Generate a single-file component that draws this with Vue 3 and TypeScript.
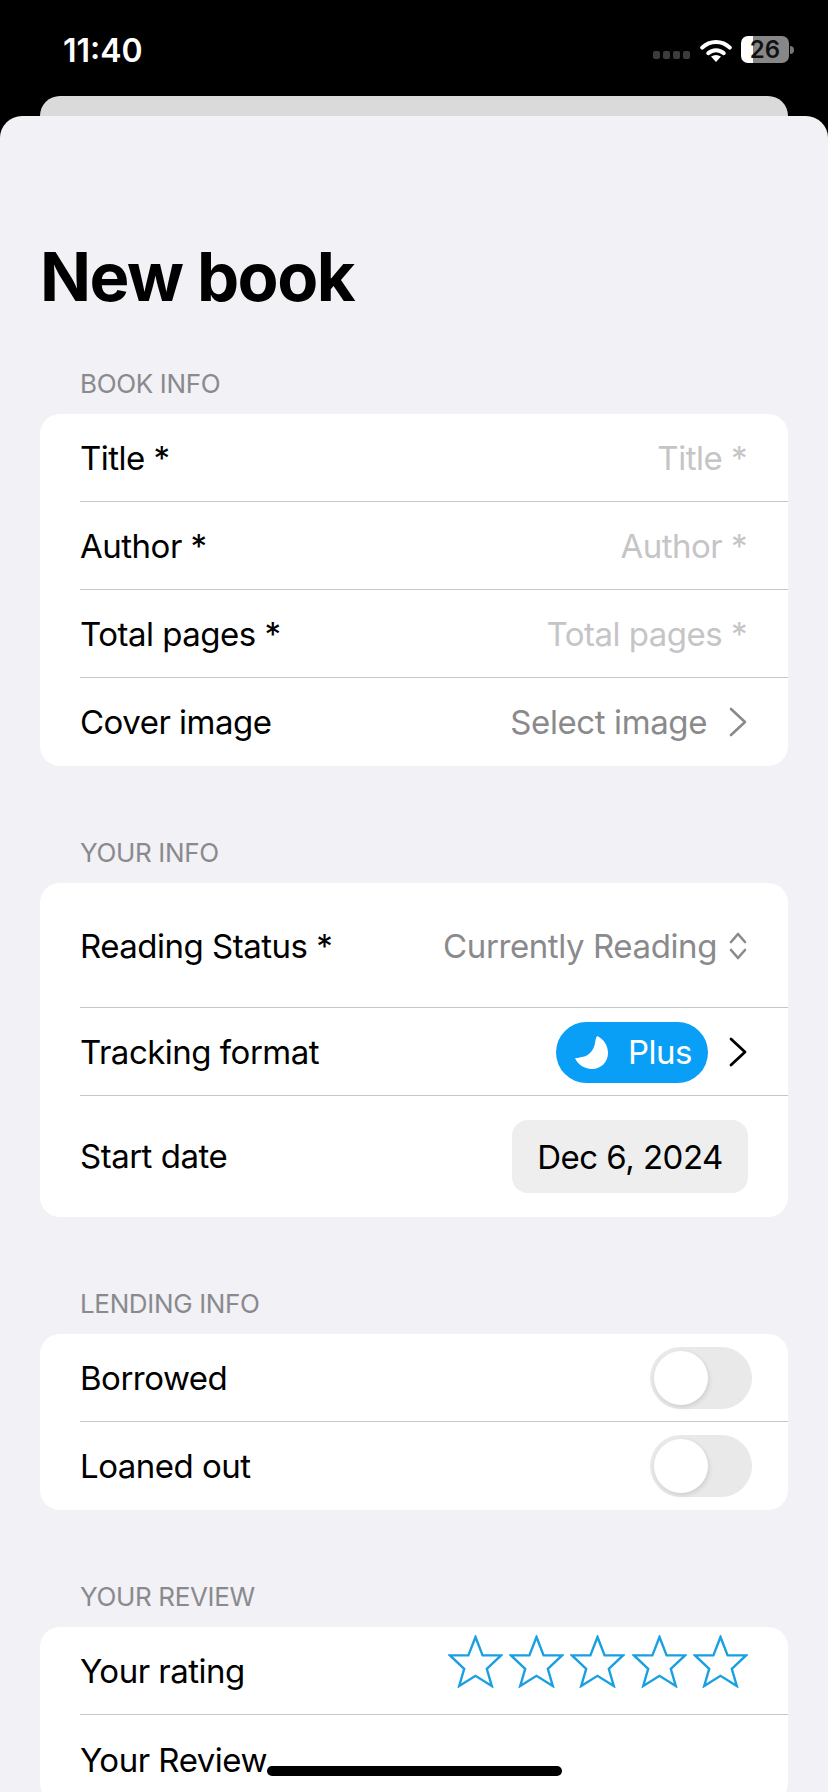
<script setup lang="ts">
const bookRows = [
  { label: 'Title *', hint: 'Title *' },
  { label: 'Author *', hint: 'Author *' },
  { label: 'Total pages *', hint: 'Total pages *' },
]
const lendingRows = ['Borrowed', 'Loaned out']
const stars = [1, 2, 3, 4, 5]
</script>

<template>
  <div class="screen">
    <header class="status-bar">
      <span class="time">11:40</span>
      <div class="status-icons">
        <div class="cell-dots"><i></i><i></i><i></i><i></i></div>
        <svg class="wifi" width="32" height="25" viewBox="0 0 32 25">
          <path d="M2.2 10.6 A19.5 19.5 0 0 1 29.8 10.6" fill="none" stroke="#fff" stroke-width="4" stroke-linecap="round" />
          <path d="M8.2 16.2 A11.5 11.5 0 0 1 23.8 16.2" fill="none" stroke="#fff" stroke-width="4" stroke-linecap="round" />
          <path d="M16 25 L11 19.6 Q16 16.2 21 19.6 Z" fill="#fff" />
        </svg>
        <div class="battery">
          <div class="battery-body"><span>26</span></div>
          <div class="battery-nub"></div>
        </div>
      </div>
    </header>
    <div class="back-sheet"></div>

    <main class="sheet">
      <h1 class="title">New book</h1>

      <section class="section">
        <h2 class="section-title">Book info</h2>
        <div class="card">
          <div v-for="row in bookRows" :key="row.label" class="row">
            <span>{{ row.label }}</span>
            <span class="hint">{{ row.hint }}</span>
          </div>
          <div class="row">
            <span>Cover image</span>
            <div class="row-end">
              <span class="muted">Select image</span>
              <svg class="chevron" width="18" height="30" viewBox="0 0 18 30">
                <path d="M2 2 L16 15 L2 28" fill="none" stroke="#8a8a8c" stroke-width="2.6" stroke-linecap="round" stroke-linejoin="round" />
              </svg>
            </div>
          </div>
        </div>
      </section>

      <section class="section">
        <h2 class="section-title">Your info</h2>
        <div class="card">
          <div class="row row-status">
            <span>Reading Status *</span>
            <div class="row-end status-end">
              <span class="muted">Currently Reading</span>
              <svg width="18" height="28" viewBox="0 0 18 28">
                <path d="M2 10 L9 2 L16 10 M2 18 L9 26 L16 18" fill="none" stroke="#8a8a8c" stroke-width="2.6" stroke-linecap="round" stroke-linejoin="round" />
              </svg>
            </div>
          </div>
          <div class="row">
            <span>Tracking format</span>
            <div class="row-end tracking-end">
              <div class="plus-pill">
                <svg width="33" height="33" viewBox="0 0 33 33">
                  <path d="M22 0 C29 3 33 10 33 17 C33 26 26 33 17 33 C10 33 3 29 0 22 C3 22 5 21.5 7 21 C14 20 19 14 20 7 C20.3 4 21 2 22 0 Z" fill="#fff" />
                </svg>
                <span>Plus</span>
              </div>
              <svg width="18" height="30" viewBox="0 0 18 30">
                <path d="M2 2 L16 15 L2 28" fill="none" stroke="#000" stroke-width="2.8" stroke-linecap="round" stroke-linejoin="round" />
              </svg>
            </div>
          </div>
          <div class="row row-date">
            <span>Start date</span>
            <div class="date-pill">Dec 6, 2024</div>
          </div>
        </div>
      </section>

      <section class="section">
        <h2 class="section-title">Lending info</h2>
        <div class="card">
          <div v-for="label in lendingRows" :key="label" class="row row-toggle">
            <span>{{ label }}</span>
            <div class="toggle"><div class="knob"></div></div>
          </div>
        </div>
      </section>

      <section class="section">
        <h2 class="section-title">Your review</h2>
        <div class="card">
          <div class="row row-rating">
            <span>Your rating</span>
            <div class="stars">
              <svg v-for="n in stars" :key="n" width="55" height="53" viewBox="0 0 55 53">
                <path d="M27.5 2 L34.6 20.4 L53 20.4 L38.8 33.8 L43.8 51 L27.5 40.8 L11.2 51 L16.2 33.8 L2 20.4 L20.4 20.4 Z" fill="none" stroke="#1a9fe2" stroke-width="2.4" />
              </svg>
            </div>
          </div>
          <div class="row row-review">
            <span>Your Review</span>
          </div>
        </div>
      </section>
    </main>

    <div class="home-indicator"></div>
  </div>
</template>

<style>
html,
body {
  margin: 0;
  background: #000;
}
</style>

<style scoped>
.screen {
  position: relative;
  width: 828px;
  height: 1792px;
  overflow: hidden;
  background: #000;
  font-family: Inter, "Liberation Sans", sans-serif;
  color: #000;
}

.status-bar {
  height: 96px;
  box-sizing: border-box;
  padding: 32px 34px 0 63px;
  display: flex;
  justify-content: space-between;
  align-items: flex-start;
}

.time {
  color: #fff;
  font-size: 32px;
  font-weight: 600;
  line-height: 38px;
}

.status-icons {
  display: flex;
  align-items: flex-start;
  padding-top: 4px;
}

.cell-dots {
  display: flex;
  gap: 3px;
  margin: 15px 10px 0 0;
}

.cell-dots i {
  display: block;
  width: 7px;
  height: 8px;
  border-radius: 2px;
  background: #3c3c3c;
}

.wifi {
  margin: 1px 9px 0 0;
}

.battery {
  display: flex;
  align-items: center;
}

.battery-body {
  width: 48px;
  height: 27px;
  border-radius: 7px;
  background: linear-gradient(to right, #fff 12px, #878787 12px);
  display: flex;
  align-items: center;
  justify-content: center;
}

.battery-body span {
  font-size: 24px;
  font-weight: 600;
  line-height: 27px;
  color: #111;
}

.battery-nub {
  width: 4px;
  height: 8px;
  margin-left: 1px;
  border-radius: 0 4px 4px 0;
  background: #777;
}

.back-sheet {
  height: 20px;
  margin: 0 40px;
  background: #dadada;
  border-radius: 20px 20px 0 0;
}

.sheet {
  height: 1676px;
  background: #f1f1f6;
  border-radius: 22px 22px 0 0;
  padding: 121px 40px 0;
  box-sizing: border-box;
}

.title {
  margin: 0 0 51px;
  font-size: 67px;
  font-weight: 700;
  line-height: 80px;
  letter-spacing: -1.5px;
}

.section {
  margin-bottom: 71px;
}

.section-title {
  margin: 0 0 14px 40px;
  font-size: 26px;
  font-weight: 400;
  line-height: 32px;
  letter-spacing: -0.35px;
  color: #8a8a8e;
  text-transform: uppercase;
}

.card {
  background: #fff;
  border-radius: 20px;
  overflow: hidden;
}

.row {
  min-height: 88px;
  box-sizing: border-box;
  margin-left: 40px;
  padding-right: 41px;
  display: flex;
  align-items: center;
  justify-content: space-between;
  border-bottom: 1px solid #c6c6c8;
  font-size: 33px;
  letter-spacing: -0.5px;
  white-space: nowrap;
}

.card .row:last-child {
  border-bottom: 0;
}

.hint {
  color: #c5c5c7;
}

.muted {
  color: #8a8a8c;
  letter-spacing: -0.4px;
}

.row-end {
  display: flex;
  align-items: center;
  gap: 22px;
}

.status-end {
  gap: 12px;
}

.tracking-end {
  gap: 21px;
}

.row-status {
  height: 125px;
  padding-top: 1px;
}

.row-date {
  height: 121px;
  padding-right: 40px;
}

.row-date > span {
  margin-bottom: 2px;
}

.row-review {
  padding-top: 2px;
}

.row-toggle {
  padding-right: 36px;
}

.row-rating {
  padding-right: 40px;
}

.plus-pill {
  width: 152px;
  height: 61px;
  margin-top: 1px;
  box-sizing: border-box;
  padding-left: 19px;
  border-radius: 31px;
  background: #0a9ff6;
  color: #fff;
  display: flex;
  align-items: center;
  gap: 20px;
}

.date-pill {
  width: 236px;
  height: 73px;
  border-radius: 16px;
  background: #eeeeef;
  display: flex;
  align-items: center;
  justify-content: center;
}

.toggle {
  width: 102px;
  height: 62px;
  box-sizing: border-box;
  padding: 4px;
  border-radius: 31px;
  background: #e9e9ea;
}

.knob {
  width: 54px;
  height: 54px;
  border-radius: 50%;
  background: #fff;
  box-shadow: 1px 2px 5px rgba(0, 0, 0, 0.12);
}

.stars {
  display: flex;
  gap: 6.3px;
  margin-bottom: 18px;
}

.home-indicator {
  position: absolute;
  left: 267px;
  bottom: 16px;
  width: 295px;
  height: 10px;
  border-radius: 5px;
  background: #000;
}
</style>
